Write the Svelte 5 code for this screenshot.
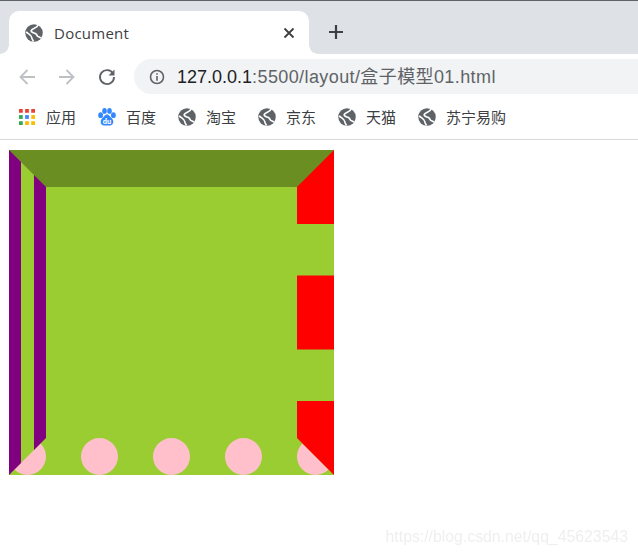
<script>
  const bookmarks = ['淘宝', '京东', '天猫', '苏宁易购'];
</script>

{#snippet globe(size)}
  <svg viewBox="0 0 16 16" width={size} height={size}>
    <circle cx="8" cy="8" r="7.800" fill="#5f6368" />
    <path d="M1 7C3 9 6 10 6 12C6 13.500 7 14 7.500 15.500" stroke="#fff" stroke-width="1.400" fill="none" />
    <path d="M11.500 1C11 4 6 3.500 5.500 6C5.500 8.500 10.500 7.500 10.500 10C11 11.500 13 11.500 14 12.500" stroke="#fff" stroke-width="1.500" fill="none" />
  </svg>
{/snippet}

<div class="browser">
  <div class="tabstrip">
    <div class="tab">
      {@render globe(18)}
      <span class="tab-title">Document</span>
      <svg class="tab-close" viewBox="0 0 12 12" width="12" height="12"><path d="M1.500 1.500l9 9M10.500 1.500l-9 9" stroke="#3c4043" stroke-width="1.800" fill="none" /></svg>
    </div>
    <svg class="new-tab" viewBox="0 0 16 16" width="16" height="16"><path d="M8 1v14M1 8h14" stroke="#3c4043" stroke-width="2.200" fill="none" /></svg>
  </div>

  <div class="toolbar">
    <svg class="nav" viewBox="0 0 18 18" width="18" height="18"><path d="M17 9H2.500M9.500 2L2.500 9l7 7" stroke="#bdc1c6" stroke-width="1.800" fill="none" /></svg>
    <svg class="nav" viewBox="0 0 18 18" width="18" height="18"><path d="M1 9h14.500M8.500 2l7 7-7 7" stroke="#bdc1c6" stroke-width="1.800" fill="none" /></svg>
    <svg class="nav reload" viewBox="0 0 18 18" width="18" height="18"><path d="M15 5.500A7 7 0 1 0 16 9" stroke="#5f6368" stroke-width="1.900" fill="none" /><path d="M16.500 1.500v6h-6z" fill="#5f6368" /></svg>
    <div class="omnibox">
      <svg class="info" viewBox="0 0 16 16" width="16" height="16"><circle cx="8" cy="8" r="6.500" stroke="#5f6368" stroke-width="1.600" fill="none" /><path d="M7.200 7h1.600v4.800H7.200zM7.200 4.200h1.600v1.600H7.200z" fill="#5f6368" /></svg>
      <span class="url"><span class="host">127.0.0.1</span>:5500/layout/盒子模型01.html</span>
    </div>
  </div>

  <div class="bookmarks">
    <div class="bookmark apps">
      <svg viewBox="0 0 17 17" width="16" height="16">
        <g fill="#ea4335"><rect x="0" y="0" width="4" height="4" /><rect x="6.500" y="0" width="4" height="4" /><rect x="13" y="0" width="4" height="4" /></g>
        <rect x="0" y="6.500" width="4" height="4" fill="#34a853" /><rect x="6.500" y="6.500" width="4" height="4" fill="#4285f4" /><rect x="13" y="6.500" width="4" height="4" fill="#fbbc05" />
        <rect x="0" y="13" width="4" height="4" fill="#34a853" /><rect x="6.500" y="13" width="4" height="4" fill="#fbbc05" /><rect x="13" y="13" width="4" height="4" fill="#fbbc05" />
      </svg>
      <span>应用</span>
    </div>
    <div class="bookmark">
      <svg viewBox="0 0 18 18" width="18" height="18">
        <g fill="#3388ff">
          <ellipse cx="2.600" cy="7.200" rx="2.400" ry="2.900" />
          <ellipse cx="6.500" cy="2.900" rx="2.300" ry="2.900" />
          <ellipse cx="11.500" cy="2.900" rx="2.300" ry="2.900" />
          <ellipse cx="15.400" cy="7.200" rx="2.400" ry="2.900" />
          <path d="M9 6.500c-2.500 0-3 2.500-5.200 4.300-2.200 2.200-1 6.700 2.200 6.700h6c3.200 0 4.400-4.500 2.200-6.700-2.200-1.800-2.700-4.300-5.200-4.300z" />
        </g>
        <text x="9" y="15.500" text-anchor="middle" font-size="7.500" font-weight="700" fill="#fff" font-family="Roboto, sans-serif">du</text>
      </svg>
      <span>百度</span>
    </div>
    {#each bookmarks as name}
      <div class="bookmark">
        {@render globe(18)}
        <span>{name}</span>
      </div>
    {/each}
  </div>

  <main class="page">
    <div class="box"></div>
  </main>

  <div class="watermark">https://blog.csdn.net/qq_45623543</div>
</div>

<style>
  :global(body) {
    margin: 0;
    background: #fff;
  }

  .browser {
    position: relative;
    width: 638px;
    height: 555px;
    overflow: hidden;
    font-family: "Open Sans", "Noto Sans CJK SC", sans-serif;
  }

  .tabstrip {
    display: flex;
    align-items: center;
    height: 53px;
    padding-left: 9px;
    background: #dee1e6;
    border-top: 1px solid #5f6368;
  }

  .tab {
    position: relative;
    display: flex;
    align-items: center;
    align-self: flex-end;
    box-sizing: border-box;
    width: 300px;
    height: 43px;
    padding: 0 14px 0 16px;
    background: #fff;
    border-radius: 10px 10px 0 0;
  }

  .tab::before,
  .tab::after {
    content: "";
    position: absolute;
    bottom: 0;
    width: 9px;
    height: 9px;
  }

  .tab::before {
    left: -9px;
    background: radial-gradient(circle at 0 0, #dee1e6 8.500px, #fff 9px);
  }

  .tab::after {
    right: -9px;
    background: radial-gradient(circle at 100% 0, #dee1e6 8.500px, #fff 9px);
  }

  .tab-title {
    margin-left: 11px;
    flex: 1;
    font-size: 15px;
    letter-spacing: 0.25px;
    color: #3c4043;
  }

  .new-tab {
    margin: 9px 0 0 19px;
  }

  .toolbar {
    display: flex;
    align-items: center;
    box-sizing: border-box;
    height: 46px;
    padding: 5px 0 6px 18px;
    background: #fff;
  }

  .nav {
    margin-right: 22px;
    flex: none;
  }

  .reload {
    margin-right: 18px;
  }

  .omnibox {
    display: flex;
    align-items: center;
    flex: 1;
    height: 35px;
    padding-left: 15px;
    background: #f1f3f4;
    border-radius: 18px 0 0 18px;
  }

  .info {
    margin-right: 12px;
  }

  .url {
    font-family: "Liberation Sans", "Noto Sans CJK SC", sans-serif;
    font-size: 18px;
    line-height: 24px;
    letter-spacing: 0.4px;
    color: #5f6368;
    white-space: nowrap;
  }

  .host {
    letter-spacing: 0;
    color: #202124;
  }

  .bookmarks {
    display: flex;
    align-items: center;
    box-sizing: border-box;
    height: 40px;
    padding: 0 0 6px 19px;
    border-bottom: 1px solid #d9d9d9;
  }

  .bookmark {
    display: flex;
    align-items: center;
    gap: 10px;
    margin-right: 22px;
    font-size: 15px;
    line-height: 18px;
    color: #3c4043;
    white-space: nowrap;
  }

  .apps {
    gap: 11px;
    margin-right: 22px;
  }

  .page {
    padding: 10px 0 0 9px;
  }

  .box {
    width: 251px;
    height: 251px;
    background: yellowgreen;
    border-style: solid dashed dotted double;
    border-width: 37px;
    border-color: olivedrab red pink purple;
  }

  .watermark {
    position: absolute;
    right: 10px;
    bottom: 9px;
    font-family: "Liberation Sans", sans-serif;
    font-size: 15.800px;
    color: #efefef;
    filter: blur(0.4px);
  }
</style>
